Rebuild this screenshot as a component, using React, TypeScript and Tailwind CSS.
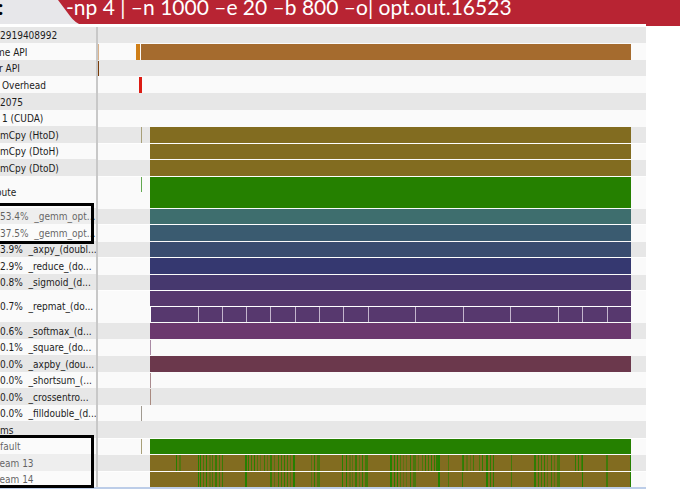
import React from "react";

interface Row {
  label: string;
  indent?: string;
  height?: string;
  tick?: string;
  tickAt?: string;
  bar?: string;
  content?: React.ReactNode;
}

const EARLY = "ml-[43px] w-px";
const START = "ml-[52px] w-px";
const SHORT = "h-4";
const TALL = "h-[17px]";
const DOUBLE = "h-8";

// Launches of the second repmat lane, in units of one iteration.
const launches = [2, 1, 1, 1, 1, 1, 1, 1, 2, 2, 2, 2, 1, 1, 1];

// Kernel slices as [start, width, opacity] on a 481 unit wide track.
type Slice = [number, number, number];

const shared: Slice[] = [
  [48, 1, 1], [50, 1, 1], [53, 1, 0.7], [56, 1, 1], [59, 2, 0.4], [62, 1, 0.7],
  [65, 2, 0.8], [69, 1, 0.7], [72, 1, 0.8], [95, 2, 1], [120, 2, 0.8],
  [124, 1, 0.5], [128, 1, 0.8], [131, 1, 0.8], [134, 1, 0.9], [137, 1, 0.8],
  [140, 1, 0.5], [143, 2, 1], [161, 1, 0.5], [164, 1, 0.9], [167, 3, 0.6],
  [192, 1, 1], [196, 1, 1], [199, 2, 0.4], [202, 1, 0.5], [205, 2, 0.8],
  [209, 1, 0.5], [212, 1, 0.9], [215, 3, 0.7], [240, 2, 1], [244, 1, 1],
  [247, 1, 1], [250, 1, 0.6], [253, 1, 0.4], [256, 1, 0.4], [260, 1, 0.9],
  [263, 3, 0.6], [288, 2, 1], [298, 1, 0.6], [312, 1, 0.8], [336, 2, 1],
  [340, 1, 0.9], [343, 1, 0.9], [361, 1, 0.7], [384, 2, 0.9], [388, 1, 0.8],
  [391, 1, 0.8], [394, 1, 0.9], [397, 1, 0.5], [401, 1, 0.8], [404, 1, 0.5],
  [407, 3, 0.6], [432, 1, 1], [456, 2, 0.7],
];

const onlyFirst: Slice[] = [
  [26, 1, 1], [29, 2, 0.5], [98, 1, 0.9], [101, 1, 0.8], [104, 1, 1],
  [107, 1, 0.6], [110, 1, 0.4], [114, 1, 0.8], [117, 1, 0.5], [268, 1, 0.4],
  [272, 1, 0.6], [275, 1, 0.9], [278, 1, 0.8], [281, 1, 0.9], [284, 1, 0.9],
  [286, 2, 0.9], [313, 1, 0.9], [316, 2, 0.4], [320, 1, 0.4], [323, 1, 0.7],
  [329, 1, 0.6], [332, 1, 0.9], [425, 1, 0.9], [428, 1, 0.9], [431, 1, 0.6],
];

function Stripes({ slices }: { slices: Slice[] }) {
  return (
    <svg
      className="block h-full w-full"
      viewBox="0 0 481 15"
      preserveAspectRatio="none"
      aria-hidden="true"
    >
      {slices.map(([x, w, o], i) => (
        <rect key={i} x={x} y="0" width={w} height="15" fill="#258000" opacity={o} />
      ))}
      <rect x="480" y="0" width="1" height="15" fill="#258000" />
    </svg>
  );
}

function RepmatLanes() {
  return (
    <div className="flex h-full flex-col">
      <div className="h-[15px] bg-[#57386e]" />
      <div className="flex flex-1 gap-px border-t border-l border-white bg-[#c3b5cc]">
        {launches.map((n, i) => (
          <div
            key={i}
            className={n === 2 ? "flex-[2_2_0%] bg-[#57386e]" : "flex-1 bg-[#57386e]"}
          />
        ))}
      </div>
    </div>
  );
}

const rows: Row[] = [
  { label: "2919408992", height: SHORT },
  {
    label: "me API",
    indent: "-ml-1",
    height: TALL,
    content: (
      <>
        <div className="w-px bg-[#d9b18a]" />
        <div className="ml-[37px] w-1 bg-[#cf7f18]" />
        <div className="mr-[15px] ml-px flex-1 bg-[#a56b2e]" />
      </>
    ),
  },
  {
    label: "r API",
    indent: "-ml-px",
    content: <div className="w-px bg-[#7a3d0a]" />,
  },
  {
    label: "Overhead",
    indent: "ml-0.5",
    height: TALL,
    content: <div className="ml-[41px] w-[3px] bg-[#dc1c14]" />,
  },
  { label: "2075", height: TALL },
  { label: "1 (CUDA)", indent: "ml-0.5" },
  { label: "mCpy (HtoD)", height: TALL, tick: "bg-[#a89f78]", bar: "bg-[#826c20]" },
  { label: "mCpy (DtoH)", bar: "bg-[#826c20]" },
  { label: "mCpy (DtoD)", height: TALL, bar: "bg-[#826c20]" },
  {
    label: "oute",
    indent: "-ml-1",
    height: DOUBLE,
    content: (
      <>
        <div className="ml-[43px] h-[15px] w-px bg-[#62a850]" />
        <div className="mr-[15px] ml-2 flex-1 bg-[#258000]" />
      </>
    ),
  },
  { label: "53.4%  _gemm_opt...", bar: "bg-[#3e6e6e]" },
  { label: "37.5%  _gemm_opt...", height: TALL, bar: "bg-[#3a5b70]" },
  { label: "3.9%  _axpy_(doubl...", bar: "bg-[#394c70]" },
  { label: "2.9%  _reduce_(do...", height: TALL, bar: "bg-[#353870]" },
  { label: "0.8%  _sigmoid_(d...", bar: "bg-[#46386e]" },
  {
    label: "0.7%  _repmat_(do...",
    height: DOUBLE,
    content: (
      <div className="mr-[15px] ml-[52px] flex-1">
        <RepmatLanes />
      </div>
    ),
  },
  { label: "0.6%  _softmax_(d...", height: TALL, bar: "bg-[#6b386e]" },
  { label: "0.1%  _square_(do...", tick: "bg-[#a98aa4]", tickAt: START },
  { label: "0.0%  _axpby_(dou...", height: TALL, bar: "bg-[#6b384c]" },
  { label: "0.0%  _shortsum_(...", tick: "bg-[#a98a8e]", tickAt: START },
  { label: "0.0%  _crossentro...", height: TALL, tick: "bg-[#a98a80]", tickAt: START },
  { label: "0.0%  _filldouble_(d...", tick: "bg-[#a09a90]" },
  { label: "ms", height: TALL },
  { label: "fault", height: SHORT, tick: "bg-[#a89f78]", bar: "bg-[#258000]" },
  {
    label: "ream 13",
    indent: "-ml-1",
    height: TALL,
    content: (
      <div className="mr-[15px] ml-[52px] flex-1 bg-[#826c20]">
        <Stripes slices={[...shared, ...onlyFirst]} />
      </div>
    ),
  },
  {
    label: "ream 14",
    indent: "-ml-1",
    content: (
      <div className="mr-[15px] ml-[52px] flex-1 bg-[#826c20]">
        <Stripes slices={shared} />
      </div>
    ),
  },
];

function Track({ row }: { row: Row }) {
  if (row.content) return <>{row.content}</>;
  return (
    <>
      {row.tick && <div className={`${row.tickAt ?? EARLY} ${row.tick}`} />}
      {row.bar && (
        <div className={`mr-[15px] flex-1 ${row.tick ? "ml-2" : "ml-[52px]"} ${row.bar}`} />
      )}
    </>
  );
}

function Timeline() {
  return (
    <main className="relative mr-[34px] -mt-0.5 border-t-[3px] border-b-2 border-t-white border-b-[#bccde8] bg-white">
      {rows.map((row, i) => (
        <div
          key={i}
          className={`flex ${row.height ?? SHORT} ${i % 2 ? "bg-[#fafafa]" : "bg-[#e7e7e7]"}`}
        >
          <div className="flex w-[98px] shrink-0 items-center overflow-hidden border-r-2 border-[#c8c8c8] pt-0.5">
            <span className={`whitespace-pre ${row.indent ?? ""}`}>{row.label}</span>
          </div>
          <div
            className={`flex min-w-0 flex-1 border-t ${
              row.bar || (row.content && i > 8) ? "border-white/80" : "border-transparent"
            }`}
          >
            <Track row={row} />
          </div>
        </div>
      ))}
      <div className="absolute top-[176px] left-0 h-[41px] w-[94px] border-y-[3px] border-r-[3px] border-black bg-white/30" />
      <div className="absolute -bottom-px left-0 h-[53px] w-[94px] border-y-[3px] border-r-[3px] border-black bg-white/30" />
    </main>
  );
}

export default function App() {
  return (
    <div className="min-h-screen overflow-hidden bg-white font-['DejaVu_Sans_Condensed','DejaVu_Sans',sans-serif] text-[10px] leading-4 text-[#1c1c1c]">
      <header className="flex h-[26px] overflow-hidden bg-[#b82433] font-[Lato,sans-serif] text-[21px] leading-[14px] whitespace-nowrap">
        <div className="relative w-[82px] shrink-0">
          <svg className="block h-[26px] w-[82px]" viewBox="0 0 82 26" aria-hidden="true">
            <path d="M0 0H58L70 16Q75 23 82 25V26H0Z" fill="#e7e7ea" />
          </svg>
          <span className="absolute top-0 -left-0.5 font-bold text-black">:</span>
        </div>
        <h1 className="-ml-4 text-white">
          -np 4 | –n 1000 –e 20 –b 800 –o| opt.out.16523
        </h1>
      </header>
      <Timeline />
    </div>
  );
}
